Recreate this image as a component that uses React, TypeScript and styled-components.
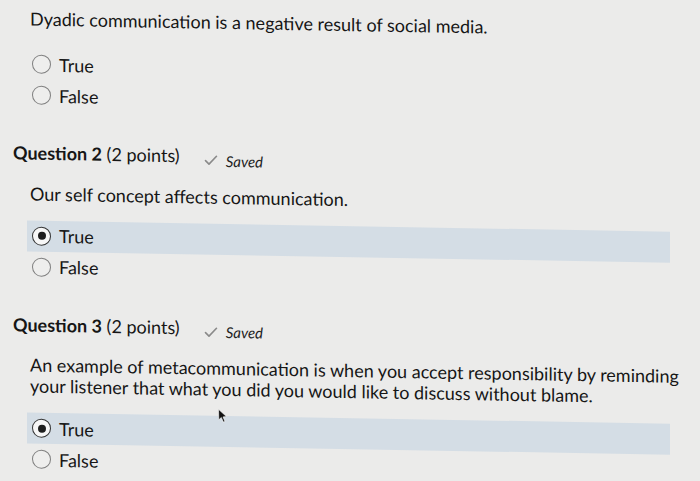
import React from "react";
import styled, { createGlobalStyle } from "styled-components";

const GlobalStyle = createGlobalStyle`
  html, body {
    margin: 0;
    padding: 0;
    background: #ebebea;
    overflow: hidden;
  }
  body {
    font-family: Lato, "Open Sans", "Liberation Sans", sans-serif;
    color: #161616;
  }
`;

const Page = styled.main`
  box-sizing: border-box;
  width: 700px;
  min-height: 481px;
  padding: 8px 0 0 13px;
  transform: skewY(1deg);
  transform-origin: 0 0;
`;

const Question = styled.section<{ $first?: boolean }>`
  margin-top: ${(p) => (p.$first ? 0 : 31)}px;
`;

const Header = styled.div`
  display: flex;
  align-items: baseline;
  font-size: 18px;
  line-height: 22px;
`;

const Title = styled.span`
  font-weight: 400;
  & > b {
    font-weight: 700;
  }
`;

const Saved = styled.span`
  display: inline-flex;
  align-items: center;
  gap: 8px;
  margin-left: 24px;
  font-style: italic;
  font-size: 15px;
  color: #222;
  transform: translateY(3px);
`;

const Check = styled.svg`
  width: 14px;
  height: 11px;
  color: #8a8a8a;
`;

const Prompt = styled.p<{ $afterHeader?: boolean }>`
  margin: ${(p) => (p.$afterHeader ? 18 : 0)}px 0 0 17px;
  font-size: 18px;
  line-height: 21px;
  max-width: 662px;
`;

const Options = styled.div<{ $first?: boolean }>`
  position: relative;
  margin: ${(p) => (p.$first ? 19 : 16)}px 0 0 14px;
  width: 643px;
`;

const Option = styled.label<{ $selected?: boolean }>`
  display: flex;
  align-items: center;
  gap: 8px;
  height: 31px;
  padding-left: 5px;
  font-size: 18px;
  background: ${(p) => (p.$selected ? "#d4dde5" : "transparent")};
`;

const Radio = styled.span<{ $checked?: boolean }>`
  box-sizing: border-box;
  width: 19px;
  height: 19px;
  border-radius: 50%;
  border: 1.5px solid ${(p) => (p.$checked ? "#333" : "#7f7f7f")};
  background: ${(p) => (p.$checked ? "#f7f7f7" : "#eeeeed")};
  display: grid;
  place-items: center;
  flex: none;
  &::after {
    content: "";
    width: 8px;
    height: 8px;
    border-radius: 50%;
    background: ${(p) => (p.$checked ? "#1e1e1e" : "transparent")};
  }
`;

const Cursor = styled.svg`
  position: absolute;
  left: 191px;
  top: -7px;
  width: 9px;
  height: 14px;
`;

type Q = {
  num?: number;
  prompt: string;
  selected?: "True" | "False";
  cursor?: boolean;
};

const questions: Q[] = [
  { prompt: "Dyadic communication is a negative result of social media." },
  { num: 2, prompt: "Our self concept affects communication.", selected: "True" },
  {
    num: 3,
    prompt:
      "An example of metacommunication is when you accept responsibility by reminding your listener that what you did you would like to discuss without blame.",
    selected: "True",
    cursor: true,
  },
];

export default function App() {
  return (
    <>
      <GlobalStyle />
      <Page>
        {questions.map((q, i) => (
          <Question key={i} $first={i === 0}>
            {q.num && (
              <Header>
                <Title>
                  <b>Question {q.num}</b> (2 points)
                </Title>
                <Saved>
                  <Check viewBox="0 0 14 11" fill="none">
                    <path
                      d="M1.5 6 L5 9.5 L12.5 1.5"
                      stroke="currentColor"
                      strokeWidth="1.6"
                      strokeLinecap="round"
                      strokeLinejoin="round"
                    />
                  </Check>
                  Saved
                </Saved>
              </Header>
            )}
            <Prompt $afterHeader={!!q.num}>{q.prompt}</Prompt>
            <Options $first={i === 0}>
              {(["True", "False"] as const).map((o) => (
                <Option key={o} $selected={q.selected === o}>
                  <Radio $checked={q.selected === o} />
                  {o}
                </Option>
              ))}
              {q.cursor && (
                <Cursor viewBox="0 0 9 14">
                  <path
                    d="M0.5 0.5 L0.8 11 L3.3 8.6 L5.4 13.2 L7 12.5 L5 8 L8.4 7.6 Z"
                    fill="#111"
                    stroke="#fff"
                    strokeWidth="0.6"
                  />
                </Cursor>
              )}
            </Options>
          </Question>
        ))}
      </Page>
    </>
  );
}
